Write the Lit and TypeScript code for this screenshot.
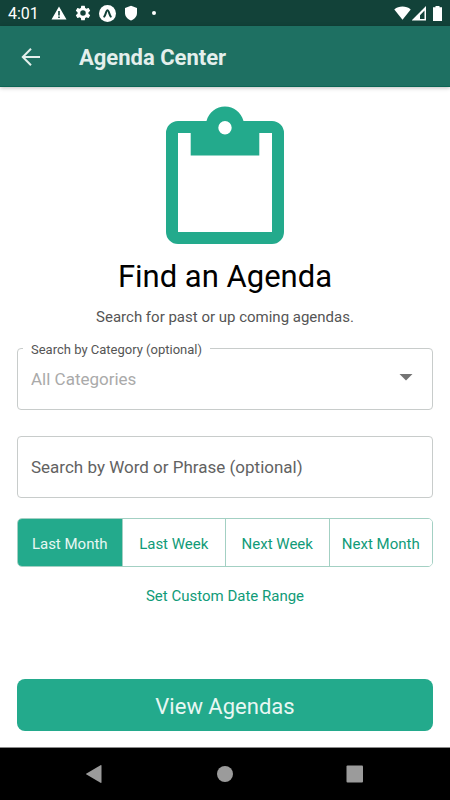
import { LitElement, html, css } from "lit";
import { customElement, state } from "lit/decorators.js";
import { classMap } from "lit/directives/class-map.js";

@customElement("status-bar")
class StatusBar extends LitElement {
  static styles = css`
    :host {
      display: flex;
      align-items: center;
      justify-content: space-between;
      height: 26px;
      padding: 0 8px;
      background: #124239;
      color: #fff;
      font-size: 16px;
      line-height: 26px;
    }
    .left,
    .right {
      display: flex;
      align-items: center;
    }
    .left {
      gap: 8px;
    }
    .time {
      margin-right: 4px;
      padding-top: 2px;
    }
    .right {
      gap: 1px;
    }
    svg {
      display: block;
      fill: currentColor;
    }
    .battery {
      margin-left: 5px;
    }
  `;

  render() {
    return html`
      <div class="left">
        <span class="time">4:01</span>
        <svg width="16" height="16" viewBox="0 0 16 16" aria-hidden="true">
          <path fill-rule="evenodd" d="M8 1.500 15.500 14.500H.5ZM7.200 6v4.400h1.600V6ZM7.200 11.400V13h1.600v-1.600Z" />
        </svg>
        <svg width="16" height="16" viewBox="1.500 1.500 21 21" aria-hidden="true">
          <path
            d="M19.14 12.94c.04-.3.06-.61.06-.94s-.02-.64-.07-.94l2.03-1.58a.49.49 0 0 0 .12-.61l-1.92-3.32a.49.49 0 0 0-.59-.22l-2.39.96c-.5-.38-1.03-.7-1.62-.94l-.36-2.54A.48.48 0 0 0 13.92 2.4h-3.84a.47.47 0 0 0-.47.41l-.36 2.54c-.59.24-1.13.57-1.62.94l-2.39-.96a.48.48 0 0 0-.59.22L2.74 8.87a.47.47 0 0 0 .12.61l2.03 1.58c-.05.3-.09.63-.09.94s.02.64.07.94l-2.03 1.58a.49.49 0 0 0-.12.61l1.92 3.32c.12.22.37.29.59.22l2.39-.96c.5.38 1.03.7 1.62.94l.36 2.54c.05.24.24.41.48.41h3.84c.24 0 .44-.17.47-.41l.36-2.54c.59-.24 1.13-.56 1.62-.94l2.39.96c.22.08.47 0 .59-.22l1.92-3.32a.47.47 0 0 0-.12-.61ZM12 15.6a3.6 3.6 0 1 1 0-7.2 3.6 3.6 0 0 1 0 7.2Z"
          />
        </svg>
        <svg width="17" height="17" viewBox="0 0 17 17" aria-hidden="true">
          <circle cx="8.500" cy="8.500" r="8.500" />
          <path
            d="M5.200 11.600C6.600 10 7.200 5.300 8.500 5.300s1.900 4.700 3.300 6.300"
            fill="none"
            stroke="#124239"
            stroke-width="2"
            stroke-linecap="round"
          />
        </svg>
        <svg width="14" height="16" viewBox="0 0 14 16" aria-hidden="true">
          <path d="M7 .8 13 3v5c0 3.600-2.500 6.200-6 7.400C3.500 14.200 1 11.600 1 8V3Z" />
        </svg>
        <svg width="16" height="16" viewBox="0 0 16 16" aria-hidden="true">
          <circle cx="8" cy="8" r="2" />
        </svg>
      </div>
      <div class="right">
        <svg width="17" height="14" viewBox="0 0 17 14" aria-hidden="true">
          <path d="M.3 3.400C4.800-.4 12.200-.4 16.700 3.400L8.500 13.800Z" />
        </svg>
        <svg width="15" height="15" viewBox="0 0 15 15" aria-hidden="true">
          <path fill-rule="evenodd" d="M14 0V14.500H-.5ZM12.500 4.500 8 9.300V13H12.500Z" />
        </svg>
        <svg class="battery" width="9" height="15" viewBox="0 0 9 15" aria-hidden="true">
          <path d="M2.500 0h4v1.300H9V15H0V1.300h2.500Z" />
        </svg>
      </div>
    `;
  }
}

@customElement("navigation-bar")
class NavigationBar extends LitElement {
  static styles = css`
    :host {
      display: block;
      background: #000;
      border-top: 1px solid #8a8a8a;
    }
    nav {
      display: grid;
      grid-template-columns: repeat(3, 130px);
      justify-content: center;
      height: 52px;
    }
    button {
      display: grid;
      place-items: center;
      padding: 0;
      border: 0;
      background: none;
      color: #9b9b9b;
    }
    svg {
      display: block;
      fill: currentColor;
    }
  `;

  render() {
    return html`
      <nav aria-label="System">
        <button aria-label="Back">
          <svg width="18" height="18" viewBox="0 0 18 18">
            <path d="M14.500.2q1-.5 1 .6v16.400q0 1.100-1 .6L.5 9.600q-1-.6 0-1.200Z" />
          </svg>
        </button>
        <button aria-label="Home">
          <svg width="18" height="18" viewBox="0 0 18 18"><circle cx="9" cy="9" r="8" /></svg>
        </button>
        <button aria-label="Recent apps">
          <svg width="18" height="18" viewBox="0 0 18 18"><rect x=".5" y=".5" width="16.500" height="17" rx="1" /></svg>
        </button>
      </nav>
    `;
  }
}

@customElement("app-root")
class AppRoot extends LitElement {
  @state() private range = "Last Month";

  private ranges = ["Last Month", "Last Week", "Next Week", "Next Month"];

  static styles = css`
    :host {
      display: flex;
      flex-direction: column;
      min-height: 100vh;
      background: #fff;
      color: #000;
      font-family: Roboto, "Liberation Sans", sans-serif;
    }
    * {
      box-sizing: border-box;
    }
    button,
    input,
    select {
      font-family: inherit;
      margin: 0;
    }
    svg {
      display: block;
    }
    header {
      display: flex;
      align-items: center;
      gap: 37px;
      height: 61px;
      padding: 2px 20px 0;
      background: #1e7062;
      border-bottom: 1px solid #0c6554;
      box-shadow: 0 1px 4px rgba(0, 0, 0, 0.25);
      color: #e4efec;
    }
    .back {
      padding: 0;
      border: 0;
      background: none;
      color: inherit;
    }
    h1 {
      margin: 0;
      padding-top: 2px;
      font-size: 22px;
      line-height: 28px;
      font-weight: 700;
    }
    main {
      display: flex;
      flex-direction: column;
      flex: 1;
      padding: 19px 17px 16px;
    }
    .clipboard {
      align-self: center;
      fill: #23aa8c;
    }
    h2 {
      margin: 15px 0 0;
      font-size: 31px;
      line-height: 36px;
      font-weight: 400;
      text-align: center;
    }
    .intro {
      margin: 10px 0 0;
      color: #555;
      font-size: 15px;
      line-height: 24px;
      text-align: center;
    }
    .field {
      position: relative;
      display: flex;
      margin-top: 19px;
    }
    .field + .field {
      margin-top: 26px;
    }
    .label {
      position: absolute;
      top: -8px;
      left: 6px;
      padding: 0 8px;
      background: #fff;
      color: #555;
      font-size: 13px;
      line-height: 20px;
    }
    .control {
      width: 100%;
      height: 62px;
      padding: 0 13px;
      border: 1px solid #c8cccb;
      border-radius: 4px;
      background: #fff;
      appearance: none;
      font-size: 17px;
      color: #aaa;
    }
    .control::placeholder {
      color: #626262;
      opacity: 1;
    }
    .caret {
      position: absolute;
      top: 26px;
      right: 20px;
      fill: #747474;
      pointer-events: none;
    }
    .ranges {
      display: grid;
      grid-template-columns: repeat(4, 1fr);
      height: 49px;
      margin-top: 20px;
      border: 1px solid #a3d0c3;
      border-radius: 5px;
      overflow: hidden;
    }
    .range {
      padding: 2px 0 0;
      border: 0;
      background: #fff;
      color: #109b78;
      font-size: 15px;
      white-space: nowrap;
    }
    .range + .range {
      border-left: 1px solid #a3d0c3;
    }
    .range.active {
      background: #23aa8c;
      color: #e8f7f3;
    }
    .custom {
      align-self: center;
      margin-top: 17px;
      padding: 0;
      border: 0;
      background: none;
      color: #109b78;
      font-size: 15px;
      line-height: 24px;
    }
    .submit {
      height: 52px;
      margin-top: auto;
      padding: 2px 0 0;
      border: 0;
      border-radius: 8px;
      background: #23aa8c;
      color: #e8f7f3;
      font-size: 22px;
    }
  `;

  render() {
    return html`
      <status-bar></status-bar>
      <header>
        <button class="back" aria-label="Back">
          <svg width="22" height="22" viewBox="0 0 22 22" fill="none" stroke="currentColor" stroke-width="2">
            <path d="M20 11H3.500M11 2.800 2.800 11l8.200 8.200" />
          </svg>
        </button>
        <h1>Agenda Center</h1>
      </header>
      <main>
        <svg class="clipboard" width="118" height="138" viewBox="0 0 118 138" aria-hidden="true">
          <path
            fill-rule="evenodd"
            d="M12 15H40.500C43 6.500 50.300.6 59 .6S75 6.500 77.500 15H106a12 12 0 0 1 12 12V126a12 12 0 0 1-12 12H12a12 12 0 0 1-12-12V27a12 12 0 0 1 12-12ZM12 27V126H106V27H93.300V49.500H24.700V27ZM59 15a6.700 6.700 0 1 0 0 13.400 6.700 6.700 0 0 0 0-13.400Z"
          />
        </svg>
        <h2>Find an Agenda</h2>
        <p class="intro">Search for past or up coming agendas.</p>
        <div class="field">
          <select class="control" id="category">
            <option>All Categories</option>
          </select>
          <label class="label" for="category">Search by Category (optional)</label>
          <svg class="caret" width="14" height="7" viewBox="0 0 14 7" aria-hidden="true">
            <path d="M.5 0h13L7 6.500Z" />
          </svg>
        </div>
        <div class="field">
          <input
            class="control"
            type="text"
            aria-label="Search by Word or Phrase (optional)"
            placeholder="Search by Word or Phrase (optional)"
          />
        </div>
        <div class="ranges" role="group" aria-label="Date range">
          ${this.ranges.map(
            (name) => html`<button
              class=${classMap({ range: true, active: name === this.range })}
              aria-pressed=${name === this.range ? "true" : "false"}
              @click=${() => (this.range = name)}
            >
              ${name}
            </button>`
          )}
        </div>
        <button class="custom">Set Custom Date Range</button>
        <button class="submit">View Agendas</button>
      </main>
      <navigation-bar></navigation-bar>
    `;
  }
}
